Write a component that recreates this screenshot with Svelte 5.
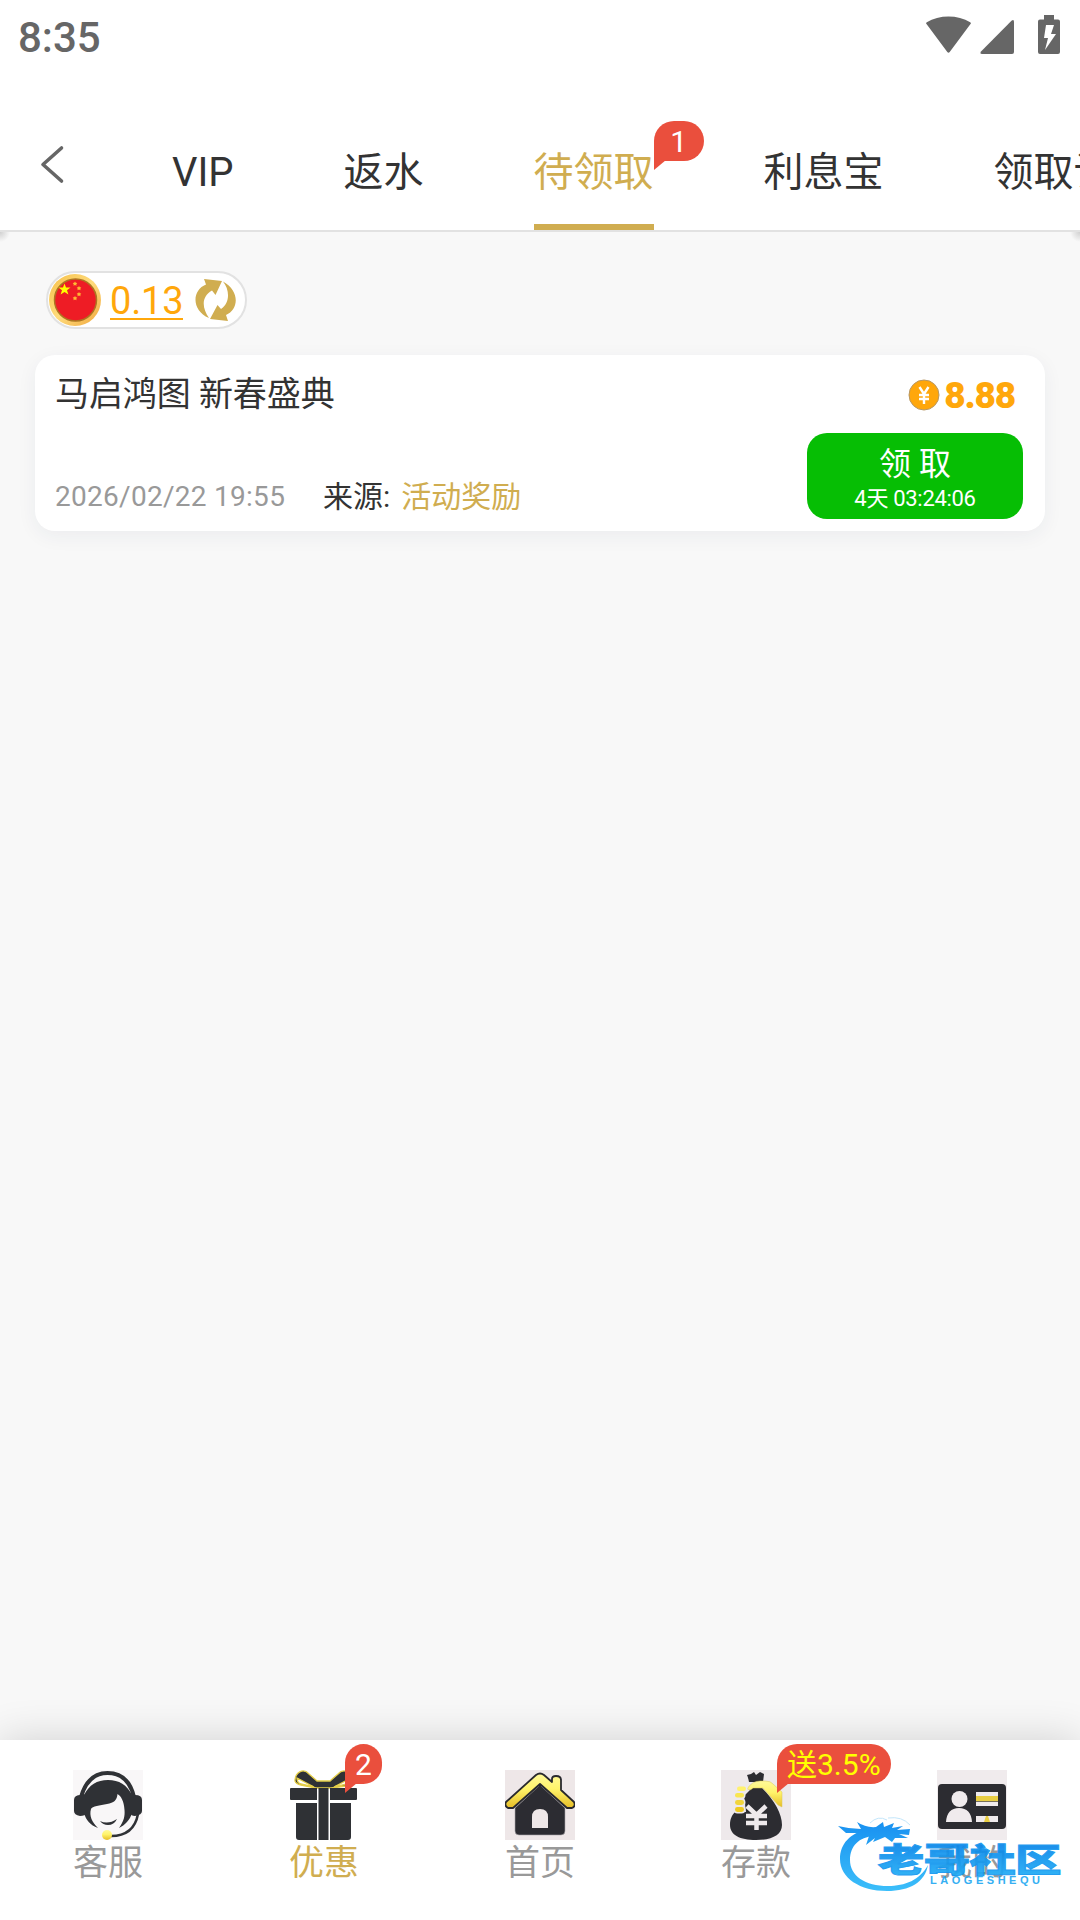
<script>
    let balance = '0.13'
    let activeTab = 2

    const tabs = [
        { name: 'VIP' },
        { name: '返水' },
        { name: '待领取', badge: '1' },
        { name: '利息宝' },
        { name: '领取记录' }
    ]

    const rewards = [
        {
            title: '马启鸿图 新春盛典',
            amount: '8.88',
            time: '2026/02/22 19:55',
            source: '活动奖励',
            left: '4天 03:24:06'
        }
    ]

    const menus = [
        { icon: 'service', name: '客服' },
        { icon: 'gift', name: '优惠', badge: '2', active: true },
        { icon: 'home', name: '首页' },
        { icon: 'deposit', name: '存款', badge: '送3.5%', promo: true },
        { icon: 'mine', name: '我的' }
    ]
</script>

<div class="page">
    <div class="status">
        <span class="clock">8:35</span>
        <svg class="status-icons" width="136" height="42" viewBox="0 0 136 42" fill="#666">
            <path d="M1.500 9Q.6 8 1.800 7.200C14-.5 33-.5 45.200 7.200Q46.400 8 45.500 9L24.700 37Q23.500 38.600 22.300 37Z" />
            <path d="M86.500 5.800Q89 3.800 89 7V37Q89 39 87 39H57Q54.500 39 56 36.500Z" />
            <path fill-rule="evenodd" d="M119 0h10v4.500h4q2 0 2 2V37q0 2-2 2h-18q-2 0-2-2V6.500q0-2 2-2h4ZM121 10l-2 13h4l-3 12 11-16h-5l3-9Z" />
        </svg>
    </div>

    <header>
        <button class="back" aria-label="back">
            <svg width="26" height="40" viewBox="0 0 26 40" fill="none" stroke="#666" stroke-width="3.600" stroke-linecap="round" stroke-linejoin="round">
                <path d="M22.500 4L4 20.500 22.500 37" />
            </svg>
        </button>
        <nav class="tabs">
            {#each tabs as tab, index}
                <button class="tab {activeTab === index ? 'active' : ''}" on:click={() => activeTab = index}>
                    {tab.name}
                    {#if tab.badge}
                        <span class="badge tab-badge">{tab.badge}</span>
                    {/if}
                </button>
            {/each}
        </nav>
    </header>

    <main>
        <div class="wallet">
            <svg width="52" height="52" viewBox="0 0 52 52">
                <defs>
                    <linearGradient id="ring" x1="0" y1="0" x2="1" y2="1">
                        <stop offset="0" stop-color="#f6c04a" />
                        <stop offset=".5" stop-color="#ffdc7c" />
                        <stop offset="1" stop-color="#f0a63c" />
                    </linearGradient>
                </defs>
                <circle cx="26" cy="26" r="26" fill="url(#ring)" />
                <circle cx="26.500" cy="26" r="21" fill="#ee1c25" stroke="#ad7621" stroke-width="1.500" />
                <path fill="#ff0" d="M15.500 9.500l1.500 4h4.500l-3.500 2.800 1.400 4.300-3.900-2.500-3.900 2.500 1.400-4.300-3.500-2.800H14Z" />
                <g fill="#fb3">
                    <path id="s" d="M26 7.500l.8 1.300 1.500.2-1 1.200.2 1.500-1.500-.6-1.500.6.200-1.500-1-1.200 1.500-.2Z" />
                    <use href="#s" x="4" y="4.500" />
                    <use href="#s" x="4" y="10.500" />
                    <use href="#s" x="0" y="14.500" />
                </g>
            </svg>
            <span class="balance">{balance}</span>
            <svg width="42" height="44" viewBox="0 0 42 44" fill="#d0ad50">
                <path d="M9 1L27 3 20.500 17 17 12.500C6 19 7 30 14 40C-4 32-3 12 11 6.500Z" />
                <path d="M33 43L15 41 22.500 27 26 31C35 25 35 12 28 3.500C45 13 44 31 31 37Z" />
            </svg>
        </div>

        {#each rewards as item}
            <section class="card">
                <div class="info">
                    <div class="title">{item.title}</div>
                    <div class="meta">
                        <span class="time">{item.time}</span>
                        <span class="label">来源:</span>
                        <span class="source">{item.source}</span>
                    </div>
                </div>
                <div class="side">
                    <div class="amount">
                        <svg width="32" height="32" viewBox="0 0 32 32">
                            <circle cx="16" cy="16" r="15" fill="#ffa70b" stroke="#b79866" stroke-width="1" />
                            <path fill="none" stroke="#fff" stroke-width="2.400" d="M11.500 8L16 15l4.500-7M16 15v10M11 16h10M11 20h10" />
                        </svg>
                        <b>{item.amount}</b>
                    </div>
                    <button class="claim">
                        <span class="claim-text">领 取</span>
                        <span class="claim-time">{item.left}</span>
                    </button>
                </div>
            </section>
        {/each}
    </main>

    <footer>
        {#each menus as menu}
            <button class="menu {menu.active ? 'active' : ''}">
                <span class="icon">
                    {#if menu.icon === 'service'}
                        <svg viewBox="0 0 70 70">
                            <defs>
                                <linearGradient id="gold" x1="0" y1="0" x2="0" y2="1">
                                    <stop offset="0" stop-color="#fffa9a" />
                                    <stop offset=".45" stop-color="#fff36a" />
                                    <stop offset="1" stop-color="#e6bd26" />
                                </linearGradient>
                            </defs>
                            <path fill="#f9f7f8" d="M0 0h70v70H0Z" />
                            <path fill="none" stroke="#2f3135" stroke-width="4" d="M8 27C13 10 22 3 34.500 3S57 10 61 27" />
                            <path fill="#2f3135" d="M11 25C16 15 24 10 35 10s19 5 24 15V43C57 50 52 55 46 58C51 51 52 46 51.500 40C51 31 48 26 44.500 24C44 30 41 33 34 34C27 35.500 19 36 18 39C16 46 19 52 25 58C17 55 13 50 11 43Z" />
                            <path fill="#2f3135" d="M8 25q4-2 6 1v17q-2 3-7 3-6-1-6-5V30q0-5 7-5ZM62 25q-4-2-5 1v17q1 3 5 3 7-1 7-5V30q0-5-7-5Z" />
                            <path fill="#2f3135" d="M27 51q8 4 17-2-3 6-9 6-5 0-8-4Z" />
                            <path fill="none" stroke="#2f3135" stroke-width="2.500" d="M65 44C62 60 52 66 38 66" />
                            <circle cx="34" cy="65" r="5" fill="url(#gold)" />
                        </svg>
                    {:else if menu.icon === 'gift'}
                        <svg viewBox="0 0 70 70">
                            <g fill="#2f3135" stroke="#e4ce48" stroke-width="1.300">
                                <path d="M6 11C6 3 14-3 20 4L28 11H41L49 4C55-3 64 3 64 11C64 15 60 16 57 16L42 18H27L12 15Q7 14 6 11Z" />
                                <path fill="#fff" d="M8 8L25 17 12 14Q8 13 8 8ZM62 8L45 17 58 14Q62 13 62 8Z" />
                            </g>
                            <path fill="#2f3135" d="M2 18h26v12H2q-1 0-1-1V19q0-1 1-1ZM41 18h26q1 0 1 1v10q0 1-1 1H41ZM29.500 18h10v52h-10ZM7 33h21v37H10q-3 0-3-3ZM41 33h21v34q0 3-3 3H41Z" />
                        </svg>
                    {:else if menu.icon === 'home'}
                        <svg viewBox="0 0 70 70">
                            <path fill="#eee7e8" d="M0 0h70v70H0Z" />
                            <path fill="#2c2c32" stroke="#aaa6a8" stroke-width=".6" d="M35 15L60 38v23q0 4-4 4H14q-4 0-4-4V38Z" />
                            <path fill="url(#gold)" stroke="#29292e" stroke-width="1.800" stroke-linejoin="round" d="M31 5Q35 2 39 5L47 12V9Q47 6 51 6 56 6 56 10V20L69 32Q71 36 67 38H62L35 14 8 38H3Q-1 36 1 32Z" />
                            <path fill="#eee7e8" d="M27 58V47q0-8 8-8t8 8v11Z" />
                        </svg>
                    {:else if menu.icon === 'deposit'}
                        <svg viewBox="0 0 70 70">
                            <path fill="#eee9eb" d="M0 0h70v70H0Z" />
                            <path fill="#2c2c31" d="M28 12q-1-5-2-7l4-1 3-2 2 3 4-3 4 2-1 8ZM31 18h10C54 31 61 44 61 55 61 65 51 70 35 70S9 65 9 55C9 49 11 45 14 42H25L23 26Z" />
                            <path fill="url(#gold)" stroke="#d9c65a" stroke-width=".5" d="M26 19Q31 11 39 11H44Q50 11 52 14L61 22V37L57 35 42 18H32Q30 21 26 19Z" />
                            <g stroke="#eee9eb" stroke-width="3" paint-order="stroke">
                                <rect x="16" y="16.500" width="9" height="4.500" rx="2.200" fill="#fff26f" />
                                <rect x="14" y="23" width="9" height="4.500" rx="2.200" fill="#f9e650" />
                                <rect x="14" y="30" width="9" height="5" rx="2.400" fill="#f2d53b" />
                                <rect x="14" y="37" width="9" height="5" rx="2.400" fill="#eec91f" />
                            </g>
                            <path fill="none" stroke="#eee9eb" stroke-width="4.500" d="M26 36L35.500 45 45 36M35.500 44V60M25 46H46M25 53H46" />
                        </svg>
                    {:else}
                        <svg viewBox="0 0 70 70">
                            <path fill="#f0ebed" d="M0 0h70v70H0Z" />
                            <rect x="1" y="14" width="68" height="45" rx="4" fill="#2c2c31" />
                            <circle cx="22.500" cy="29" r="8" fill="#f0ebed" />
                            <path fill="#f0ebed" d="M9 52Q10 38 22 38T35 52ZM39 22h22v14H39ZM39 46h22v6H39Z" />
                            <path fill="#e9ce43" d="M39 26h22v5H39ZM47 52l1-3 1-3h2l2 6Z" />
                            <path stroke="#77705a" d="M39 31.500h22" />
                        </svg>
                    {/if}
                    {#if menu.badge}
                        <span class="badge menu-badge {menu.promo ? 'promo' : ''}">{menu.badge}</span>
                    {/if}
                </span>
                <span class="name">{menu.name}</span>
            </button>
        {/each}
    </footer>

    <svg class="logo" width="240" height="100" viewBox="0 0 240 100">
        <defs>
            <linearGradient id="blue" gradientUnits="userSpaceOnUse" x1="0" y1="25" x2="0" y2="90">
                <stop offset="0" stop-color="#078af0" />
                <stop offset="1" stop-color="#2bb9fa" />
            </linearGradient>
            <linearGradient id="blueText" x1="0" y1="0" x2="0" y2="1">
                <stop offset=".2" stop-color="#0783e8" />
                <stop offset="1" stop-color="#25b4f8" />
            </linearGradient>
        </defs>
        <path fill="url(#blue)" d="M38 29C20 33 10 44 10 59C10 78 30 91 57 91C80 91 95 82 98 65C90 80 75 86 58 86C35 86 20 76 20 60C20 46 29 37 44 36Z" />
        <path fill="url(#blue)" d="M8 26Q20 29 31 29L27 22Q36 28 46 27L53 22 54 27 64 23 62 28 73 26 67 30 80 29 79 35 69 34 78 38 65 38 62 42 55 37 43 42 45 38 36 45 39 36 29 33 16 33Z" />
        <path fill="none" stroke="#bfe5fb" stroke-width="1" d="M40 23Q48 15 57 20M58 18Q72 16 80 25" />
        <g transform="translate(48 72) scale(1.4 1)">
            <text class="logo-name" x="0" y="0" textLength="131" fill="url(#blueText)">老哥社区</text>
        </g>
        <text class="logo-en" x="100" y="84" textLength="110" fill="#24a9f2">LAOGESHEQU</text>
    </svg>
</div>

<style>
    :global(body) {
        background: #f8f8f8;
    }

    * {
        box-sizing: border-box;
    }

    .page {
        position: relative;
        height: 1920px;
        display: flex;
        flex-direction: column;
        overflow: hidden;
        background: #f8f8f8;
        color: #333;
        font-family: Roboto, "Noto Sans CJK SC", sans-serif;
    }

    button {
        border: 0;
        padding: 0;
        background: none;
        font: inherit;
        color: inherit;
    }

    svg {
        display: block;
        flex: none;
    }

    .status {
        height: 74px;
        padding: 0 19px 0 18px;
        display: flex;
        justify-content: space-between;
        background: #fff;
    }

    .clock {
        font-size: 42px;
        line-height: 76px;
        font-weight: 500;
        color: #666;
    }

    .status-icons {
        margin-top: 15px;
    }

    header {
        height: 158px;
        display: flex;
        background: #fff;
        border-bottom: 2px solid #e2e2e2;
    }

    .back {
        width: 117px;
        padding: 24px 0 0 39px;
        flex: none;
        display: flex;
        align-items: center;
    }

    .tabs {
        flex: 1;
        min-width: 0;
        display: flex;
        gap: 110px;
        padding-left: 55px;
        overflow: hidden;
    }

    .tab {
        position: relative;
        flex: none;
        font-size: 40px;
        line-height: 60px;
        padding-top: 48px;
        border-bottom: 6px solid transparent;
        white-space: nowrap;
    }

    .active {
        color: #d0ad50;
    }

    .tab.active {
        border-color: #d0ad50;
    }

    .badge {
        position: absolute;
        height: 40px;
        padding: 0 10px;
        border-radius: 20px 20px 20px 0;
        background: #ea4f3d;
        color: #fff;
        font-size: 30px;
        line-height: 41px;
        white-space: nowrap;
    }

    .badge::after {
        content: '';
        position: absolute;
        left: 0;
        top: 39px;
        border-top: 10px solid #ea4f3d;
        border-right: 12px solid transparent;
    }

    .tab-badge {
        left: 100%;
        top: 47px;
        width: 50px;
        text-align: center;
    }

    main {
        flex: 1;
        padding: 39px 35px 0;
        background:
            radial-gradient(circle at 0 0, #d0d0d0, transparent 10px),
            radial-gradient(circle at 100% 0, #d0d0d0, transparent 10px);
    }

    .wallet {
        width: 201px;
        height: 58px;
        margin-left: 11px;
        padding-left: 1px;
        display: flex;
        align-items: center;
        border: 2px solid #e2e2e2;
        border-radius: 29px;
        background: #fff;
    }

    .balance {
        width: 73px;
        height: 39px;
        margin: 0 12px 0 9px;
        border-bottom: 2px solid #ffa70b;
        color: #ffa70b;
        font-size: 38px;
        line-height: 41px;
        letter-spacing: -0.2px;
    }

    .card {
        height: 176px;
        margin-top: 26px;
        padding: 0 22px 0 20px;
        display: flex;
        justify-content: space-between;
        border-radius: 20px;
        background: #fff;
        box-shadow: 0 5px 20px rgba(31, 55, 91, 0.06);
    }

    .title {
        height: 112px;
        padding-top: 14px;
        font-size: 34px;
        line-height: 50px;
        letter-spacing: -0.1px;
    }

    .meta {
        display: flex;
        align-items: center;
        font-size: 30px;
        line-height: 60px;
    }

    .time {
        width: 268px;
        color: #999;
        font-size: 28px;
        letter-spacing: 0.28px;
    }

    .source {
        margin-left: 11px;
        color: #d0ad50;
    }

    .side {
        width: 216px;
    }

    .amount {
        height: 79px;
        margin-bottom: -1px;
        padding-right: 8px;
        display: flex;
        justify-content: flex-end;
        align-items: center;
        gap: 4px;
        color: #ffa70b;
        font-size: 37px;
    }

    .amount b {
        font-weight: 900;
        letter-spacing: -1.2px;
        line-height: 42px;
        padding-top: 2px;
    }

    .claim {
        width: 216px;
        height: 86px;
        display: flex;
        flex-direction: column;
        align-items: center;
        border-radius: 20px;
        background: #06be04;
        color: #fff;
    }

    .claim-text {
        padding-top: 11px;
        font-size: 32px;
        line-height: 40px;
    }

    .claim-time {
        font-size: 22px;
        line-height: 30px;
        letter-spacing: -0.3px;
    }

    footer {
        height: 180px;
        display: flex;
        background: #fff;
        box-shadow: 0 0 40px rgba(0, 0, 0, 0.16);
    }

    .menu {
        flex: 1;
        display: flex;
        flex-direction: column;
        align-items: center;
        padding-top: 30px;
        color: #999;
    }

    .menu.active {
        color: #d0ad50;
    }

    .icon {
        position: relative;
        width: 70px;
        height: 70px;
    }

    .icon svg {
        width: 70px;
        height: 70px;
    }

    .menu-badge {
        left: 56px;
        top: -26px;
    }

    .promo {
        color: #ff0;
    }

    .name {
        font-size: 35px;
        line-height: 48px;
    }

    .logo {
        position: absolute;
        left: 830px;
        top: 1800px;
        opacity: 0.92;
    }

    .logo-name {
        font-family: "Noto Sans CJK SC", sans-serif;
        font-size: 33px;
        font-weight: 900;
        stroke: #1296ef;
        stroke-width: 1px;
    }

    .logo-en {
        font-family: "Liberation Sans", sans-serif;
        font-size: 11px;
        font-weight: 700;
    }
</style>
